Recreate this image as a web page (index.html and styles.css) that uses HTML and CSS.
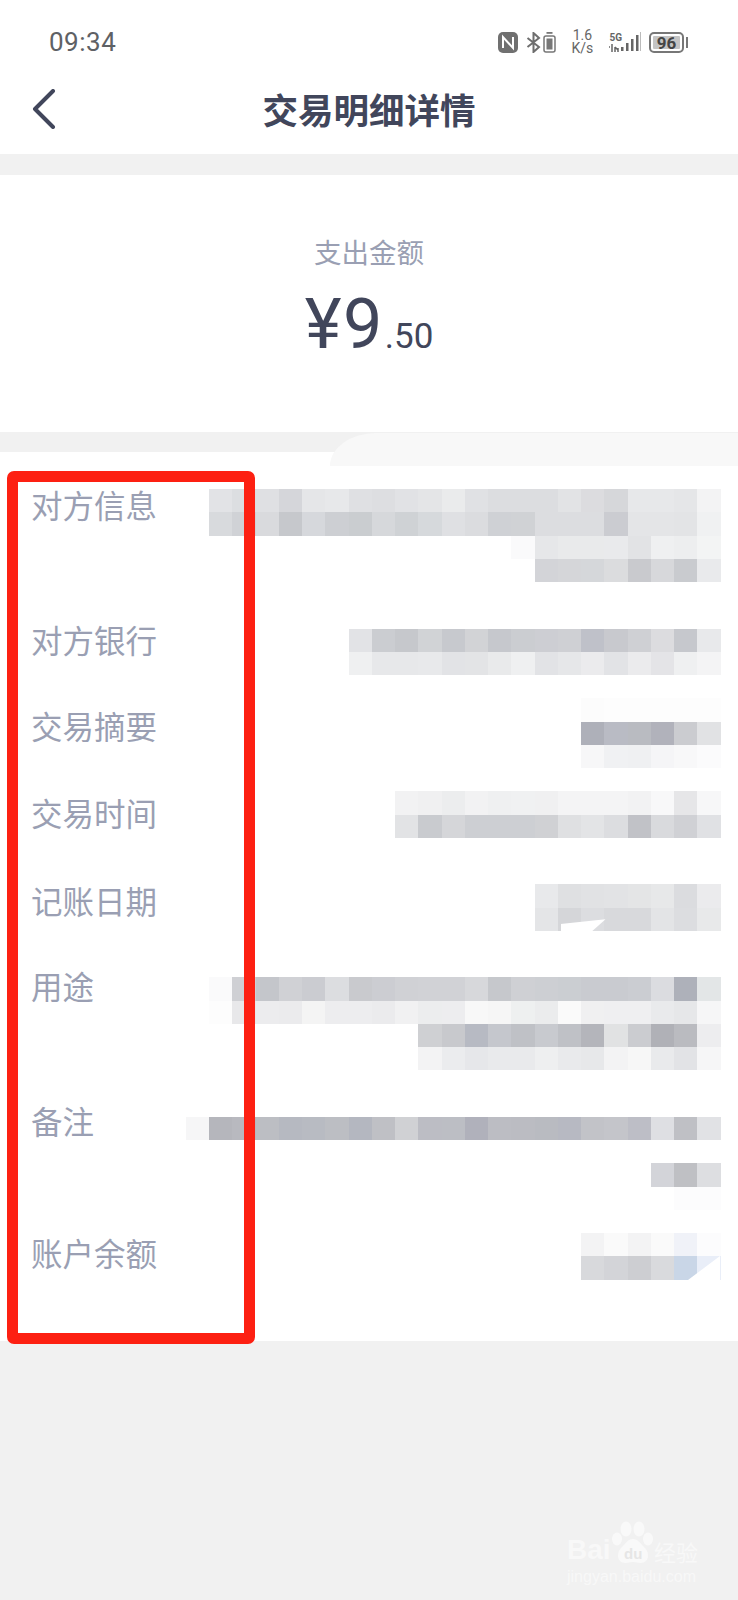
FILE: index.html
```html
<!DOCTYPE html>
<html lang="zh-CN">
<head>
  <meta charset="UTF-8" />
  <meta name="viewport" content="width=device-width, initial-scale=1.0"/>
  <title>交易明细详情</title>
  <link rel="stylesheet" href="styles.css">
</head>
<body>
<div class="top">
  <div class="status-bar">
    <span class="clock">09:34</span>
    <div class="status-icons">
      <svg class="icon-nfc" width="20" height="21" viewBox="0 0 20 21">
        <rect x="0" y="0" width="20" height="21" rx="5" fill="#707070"/>
        <path d="M5 16V5l10 11V5" fill="none" stroke="#fff" stroke-width="2"/>
      </svg>
      <svg class="icon-bt" width="15" height="21" viewBox="0 0 15 21">
        <path d="M1.500 6l11.500 9-5.500 5V1l5.500 5-11.500 9" fill="none" stroke="#6e6e6e" stroke-width="2"/>
      </svg>
      <svg class="icon-cell" width="13" height="21" viewBox="0 0 13 21">
        <rect x="3.500" y="0" width="6" height="1.800" fill="#777"/>
        <rect x="1" y="4" width="11" height="16" rx="2" fill="none" stroke="#777" stroke-width="1.500"/>
        <rect x="3.500" y="6.500" width="6" height="11" fill="#777"/>
      </svg>
      <div class="speed"><span>1.6</span><span>K/s</span></div>
      <div class="net">
        <span class="net-five">5G</span>
        <svg width="12" height="8" viewBox="0 0 12 8">
          <path d="M3 0v8M0 3h1M6 3v5M6 3l3 3M9 4v4" fill="none" stroke="#666" stroke-width="1.500"/>
        </svg>
      </div>
      <svg class="icon-signal" width="20" height="21" viewBox="0 0 20 21">
        <rect x="0" y="15" width="2.500" height="4" fill="#666"/>
        <rect x="5" y="11" width="2.500" height="8" fill="#666"/>
        <rect x="10" y="7" width="2.500" height="12" fill="#666"/>
        <rect x="15" y="3" width="2.500" height="16" fill="#666"/>
        <rect x="19" y="0" width="1" height="19" fill="#bbb"/>
      </svg>
      <div class="battery">
        <div class="battery-body"><span class="battery-level">96</span></div>
        <div class="battery-cap"></div>
      </div>
    </div>
  </div>
  <div class="nav-bar">
    <svg class="back" width="24" height="40" viewBox="0 0 24 40">
      <path d="M21 2L3 20l18 18" fill="none" stroke="#41465b" stroke-width="4" stroke-linecap="round" stroke-linejoin="round"/>
    </svg>
    <div class="nav-title">交易明细详情</div>
  </div>
</div>

<div class="amount-box">
  <div class="amount-label">支出金额</div>
  <div class="amount"><span class="amount-big">¥9</span><span class="amount-small">.50</span></div>
</div>

<div class="detail-list">
  <div class="blob"></div>
  <div class="detail-row">
    <div class="detail-label">对方信息</div>
    <div class="mosaic" data-row="0"></div>
  </div>
  <div class="detail-row">
    <div class="detail-label">对方银行</div>
    <div class="mosaic" data-row="1"></div>
  </div>
  <div class="detail-row">
    <div class="detail-label">交易摘要</div>
    <div class="mosaic" data-row="2"></div>
  </div>
  <div class="detail-row">
    <div class="detail-label">交易时间</div>
    <div class="mosaic" data-row="3"></div>
  </div>
  <div class="detail-row">
    <div class="detail-label">记账日期</div>
    <div class="mosaic" data-row="4"><div class="nick nick-date"></div></div>
  </div>
  <div class="detail-row">
    <div class="detail-label">用途</div>
    <div class="mosaic" data-row="5"></div>
  </div>
  <div class="detail-row">
    <div class="detail-label">备注</div>
    <div class="mosaic" data-row="6"></div>
  </div>
  <div class="detail-row">
    <div class="detail-label">账户余额</div>
    <div class="mosaic" data-row="7"><div class="nick nick-balance"></div></div>
  </div>
  <div class="red-box"></div>
</div>

<div class="watermark">
  <div class="wm-brand">
    <span class="wm-bai">Bai</span>
    <div class="wm-paw">
      <svg width="42" height="46" viewBox="0 0 42 46">
        <ellipse cx="14" cy="9" rx="5.500" ry="7.500" fill="#f9f9f9"/>
        <ellipse cx="27" cy="9" rx="5.500" ry="7.500" fill="#f9f9f9"/>
        <ellipse cx="5" cy="19" rx="5" ry="6.500" fill="#f9f9f9"/>
        <ellipse cx="36" cy="19" rx="5" ry="6.500" fill="#f9f9f9"/>
        <path d="M21 19c-5 0-8 5-12 9-5 5-4 15 4 15 3 0 5-1 8-1s5 1 8 1c8 0 9-10 4-15-4-4-7-9-12-9z" fill="#f9f9f9"/>
      </svg>
      <span class="wm-du">du</span>
    </div>
    <span class="wm-cn">经验</span>
  </div>
  <div class="wm-url">jingyan.baidu.com</div>
</div>

<script src="script.js"></script>
</body>
</html>
```

FILE: styles.css
```css
body {
  background-color: #f1f1f1;
  color: #41465b;
  font-family: Roboto, "Noto Sans CJK SC", sans-serif;
  margin: 0;
  min-height: 1600px;
  position: relative;
  overflow-x: hidden;
}
.top {
  background-color: #fff;
  height: 154px;
}
.status-bar {
  display: flex;
  align-items: center;
  justify-content: space-between;
  height: 84px;
  padding: 0 50px 0 49px;
  box-sizing: border-box;
}
.clock {
  color: #5e6165;
  font-size: 26px;
  letter-spacing: 0.5px;
}
.status-icons {
  display: flex;
  align-items: center;
  color: #666;
}
.icon-bt { margin-left: 8px; }
.icon-cell { margin-left: 2px; }
.speed {
  display: flex;
  flex-direction: column;
  align-items: center;
  font-size: 14px;
  line-height: 13px;
  margin-left: 14px;
  width: 24px;
}
.net {
  display: flex;
  flex-direction: column;
  align-items: flex-start;
  margin-left: 15px;
}
.net-five {
  font-size: 10px;
  line-height: 12px;
  font-weight: 700;
}
.icon-signal { margin-left: -1px; }
.battery {
  display: flex;
  align-items: center;
  margin-left: 8px;
}
.battery-body {
  border: 2px solid #777;
  border-radius: 5px;
  width: 35px;
  height: 21px;
  padding: 2px;
  box-sizing: border-box;
  display: flex;
}
.battery-level {
  background-color: #c4c4c4;
  color: #444;
  flex: 1;
  font-size: 17px;
  font-weight: 700;
  line-height: 15px;
  text-align: center;
  border-radius: 1px;
}
.battery-cap {
  background-color: #777;
  width: 2px;
  height: 11px;
  margin-left: 2px;
}
.nav-bar {
  display: flex;
  align-items: center;
  justify-content: center;
  position: relative;
  height: 50px;
}
.back {
  position: absolute;
  left: 32px;
  top: 5px;
}
.nav-title {
  font-family: "Noto Sans CJK SC", sans-serif;
  font-size: 35.5px;
  font-weight: 700;
  line-height: 50px;
}
.amount-box {
  background-color: #fff;
  height: 257px;
  margin-top: 21px;
  display: flex;
  flex-direction: column;
  align-items: center;
  padding-top: 56px;
  box-sizing: border-box;
}
.amount-label {
  color: #9a9fb3;
  font-family: "Noto Sans CJK SC", sans-serif;
  font-size: 27.5px;
  line-height: 40px;
}
.amount {
  display: flex;
  align-items: baseline;
  line-height: 82px;
  margin-top: 12px;
}
.amount-big {
  font-size: 70px;
  letter-spacing: 1.5px;
}
.amount-small {
  font-size: 35px;
  margin-left: 1px;
}
.detail-list {
  background-color: #fff;
  margin-top: 20px;
  height: 889px;
  padding: 37px 17.5px 0 31px;
  box-sizing: border-box;
  position: relative;
}
.blob {
  background-color: #f8f8f8;
  border-top-left-radius: 46px 33px;
  position: absolute;
  left: 330px;
  right: 0;
  top: -19px;
  height: 33px;
}
.detail-row {
  display: flex;
  align-items: flex-start;
  justify-content: space-between;
  margin-bottom: 23.25px;
}
.detail-label {
  color: #9a9fb3;
  font-family: "Noto Sans CJK SC", sans-serif;
  font-size: 31.5px;
  line-height: 30px;
  white-space: nowrap;
}
/* labels don't line up with the value blocks, so each has its own offset */
.detail-row:nth-child(2) .detail-label { margin-top: 0; }
.detail-row:nth-child(3) .detail-label { margin-top: -5px; }
.detail-row:nth-child(4) .detail-label { margin-top: 12px; }
.detail-row:nth-child(5) .detail-label { margin-top: 6px; }
.detail-row:nth-child(6) .detail-label { margin-top: 1px; }
.detail-row:nth-child(7) .detail-label { margin-top: -7px; }
.detail-row:nth-child(8) .detail-label { margin-top: -12px; }
.detail-row:nth-child(9) .detail-label { margin-top: 4px; }
.mosaic { position: relative; }
.mosaic-line {
  display: flex;
  justify-content: flex-end;
  height: 23.25px;
}
.mosaic-cell {
  width: 23.25px;
  height: 100%;
}
.nick {
  background-color: #fff;
  position: absolute;
}
.nick-date {
  left: 26px;
  top: 35px;
  width: 45px;
  height: 12px;
  clip-path: polygon(0 40%, 100% 0, 70% 100%, 0 100%);
}
.nick-balance {
  left: 107px;
  top: 23px;
  width: 32px;
  height: 24px;
  clip-path: polygon(100% 0, 100% 100%, 0 100%);
}
.red-box {
  border: 11px solid #fd2012;
  border-radius: 7px;
  box-sizing: border-box;
  position: absolute;
  left: 7px;
  top: 19px;
  width: 248px;
  height: 873px;
}
.watermark {
  color: #f8f8f8;
  position: absolute;
  left: 567px;
  top: 1520px;
  width: 134px;
}
.wm-brand {
  display: flex;
  align-items: flex-end;
  height: 46px;
}
.wm-bai {
  font-family: "Liberation Sans", sans-serif;
  font-size: 28px;
  font-weight: 700;
  line-height: 32px;
  width: 45px;
}
.wm-paw {
  position: relative;
  width: 42px;
  height: 46px;
}
.wm-du {
  color: #e6e6e6;
  font-family: "Liberation Sans", sans-serif;
  font-size: 15px;
  font-weight: 700;
  position: absolute;
  left: 12px;
  top: 25px;
}
.wm-cn {
  font-family: "Noto Sans CJK SC", sans-serif;
  font-size: 22px;
  line-height: 30px;
  white-space: nowrap;
}
.wm-url {
  font-family: "Liberation Sans", sans-serif;
  font-size: 16px;
  line-height: 20px;
  margin-top: 1px;
  white-space: nowrap;
}
```

FILE: script.js
```js
// pixelated values, one array per line, colours listed left to right
const mosaics = [
  [
    ["#e2e3e6","#dcdee1","#dfe0e3","#d5d6da","#e5e6e8","#e7e8ea","#dfe0e3","#dddee1","#e1e2e5","#e4e5e7","#eaebec","#e0e1e4","#dcdde0","#dcdde0","#dcdde0","#e2e3e5","#dcdcdf","#d6d7da","#e7e8ea","#e7e8ea","#e5e6e8","#f3f3f4"],
    ["#d8dadd","#d0d2d6","#d9dadd","#c6c8cc","#d6d8dc","#cdcfd3","#cacdd0","#d6d8db","#cfd2d5","#d6d9dc","#dfe0e3","#dbdcdf","#cfd1d5","#d0d2d5","#dcdde0","#dcdde0","#dcdde0","#cbccd1","#e4e5e7","#e4e5e7","#e3e4e6","#f0f1f2"],
    ["#fafafb","#e6e7e9","#e9eaeb","#e9eaeb","#e9eaec","#e2e3e5","#eff0f1","#edeeef","#f3f4f4"],
    ["#d3d4d8","#d5d6d9","#d5d7da","#dbdcde","#c9cace","#d7d8db","#c9cbcf","#e9eaec"],
    []
  ],
  [
    ["#e2e3e6","#cbcdd1","#c6c8cc","#d1d3d6","#c7c9ce","#d2d3d6","#c6c8cd","#cbcdd1","#cdced3","#cfd0d4","#bfc1c9","#c8c9ce","#cfd0d4","#dcdcdf","#c6c8cd","#e8e9eb"],
    ["#eff0f1","#e7e8ea","#e7e8ea","#e8e9eb","#e2e3e6","#e3e4e6","#e9eaeb","#eff0f1","#e2e3e6","#e6e7e9","#ebebed","#e2e3e6","#ebebed","#e4e4e7","#eff0f1","#f4f4f5"]
  ],
  [
    ["#fcfcfc","#fdfdfd","#fdfdfd","#fdfdfd","#fdfdfd","#fdfdfd"],
    ["#aeb0b9","#b9bbc4","#b9bbc1","#b1b2bb","#cbccd0","#e1e2e4"],
    ["#f7f7f8","#f0f1f3","#eff0f2","#f5f5f7","#f8f8f9","#fbfbfc"]
  ],
  [
    ["#f2f2f3","#f0f0f1","#ecedee","#f2f2f3","#eff0f1","#f0f1f2","#f0f0f1","#f4f4f5","#f4f4f5","#f4f4f5","#f2f2f3","#f8f8f9","#e6e6e8","#f7f7f8"],
    ["#e2e3e5","#c9cbcf","#d5d6d9","#cdcfd3","#cdcfd3","#cdcfd3","#d0d1d4","#dfe0e2","#e3e4e6","#dcdde0","#c1c2c7","#d9dadd","#d0d1d5","#e0e1e4"],
    []
  ],
  [
    ["#e8e9eb","#dfe0e2","#e1e2e4","#e2e3e5","#e4e5e6","#e7e8e9","#dbdcdf","#ebebed"],
    ["#e4e5e7","#d5d6d9","#dcdde0","#d8d9dc","#d8d9dc","#e3e4e6","#dcdde0","#e8e9ea"],
    []
  ],
  [
    ["#fafafb","#cfd0d4","#c4c6cb","#d0d1d5","#cbccd1","#dcdde0","#c9cace","#cccdd2","#d0d1d5","#d1d2d6","#d1d2d6","#d7d8db","#c6c8cc","#cfd0d4","#cdcfd3","#cbced2","#c9cbd0","#c9cbd0","#cbcdd2","#dbdce0","#aeb1ba","#e3e6e7"],
    ["#fdfdfd","#e8e8ea","#ececee","#ebebed","#f4f4f4","#ededef","#ededef","#ebebed","#f1f1f2","#ecedee","#ededef","#f8f8f8","#f6f6f6","#eef0f0","#ebeced","#fafafa","#f0f0f1","#efeff1","#efeff1","#e9eaec","#e6e7e9","#f6f6f7"],
    ["#cfd0d3","#c8c9cd","#b7bac3","#c5c7cd","#bfc1c6","#c8cacf","#bfc1c6","#b4b5bb","#e1e2e3","#cbccd0","#b0b1b7","#babbc0","#ededef"],
    ["#f3f3f4","#ebecee","#e6e7ea","#e9eaec","#e9eaec","#eeeff0","#e9eaec","#e7e8ea","#f3f3f4","#f7f7f7","#e9eaec","#e2e3e6","#f6f6f7"],
    []
  ],
  [
    ["#f6f6f7","#b5b6bc","#b8b9bf","#bcbec3","#b6b9c1","#b8bbc2","#bcbec3","#b4b7c0","#bfc0c5","#d0d1d4","#bcbdc4","#bcbec4","#b0b1bb","#bcbdc3","#bbbcc2","#b9bbc1","#b7b9c2","#c2c3c8","#c4c5ca","#bdbec6","#dedfe3","#bfc0c5","#e1e2e5"],
    [],
    ["#d3d4d9","#bfc0c4","#dddee1"],
    ["#fcfcfd","#fcfcfd"]
  ],
  [
    ["#f3f3f4","#fafafa","#f3f3f4","#fafafa","#f0f2f8","#fcfcfd"],
    ["#d8d9dc","#d3d4d8","#cdced2","#d9dadd","#c9d6e7","#e9eef8"]
  ]
];

document.querySelectorAll('.mosaic').forEach(box => {
  const lines = mosaics[Number(box.dataset.row)];
  const longest = Math.max(...lines.map(l => l.length));
  box.style.width = (longest * 23.25) + 'px';
  lines.forEach(colors => {
    const line = document.createElement('div');
    line.className = 'mosaic-line';
    colors.forEach(c => {
      const cell = document.createElement('div');
      cell.className = 'mosaic-cell';
      cell.style.backgroundColor = c;
      line.appendChild(cell);
    });
    box.appendChild(line);
  });
});
```
